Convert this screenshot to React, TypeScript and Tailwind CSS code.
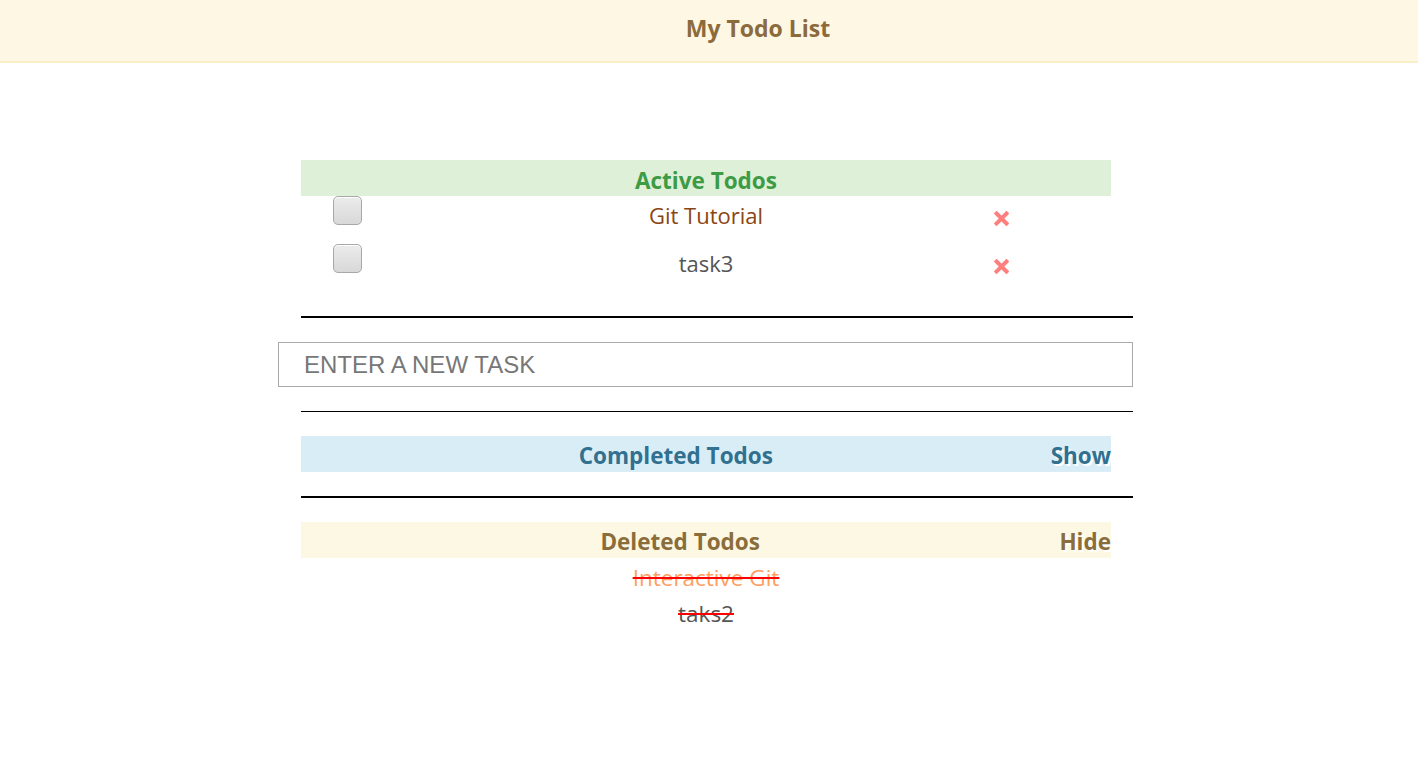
import React from "react";

const font = { fontFamily: '"Open Sans", "Noto Sans", sans-serif' };

function XIcon() {
  return (
    <svg width="15" height="15" viewBox="0 0 15 15">
      <path d="M2.5 2.5 L12.5 12.5 M12.5 2.5 L2.5 12.5" stroke="#ff7f7f" strokeWidth="4" strokeLinecap="square" />
    </svg>
  );
}

function Check() {
  return (
    <div className="w-[29px] h-[29px] rounded-[5px] border border-[#a8a8a8] bg-gradient-to-b from-[#ececec] to-[#d8d8d8] shadow-[inset_0_1px_0_#fff]" />
  );
}

function Row({ text, color }: { text: string; color: string }) {
  return (
    <div className="grid grid-cols-3 h-[48px]">
      <div className="pl-[32px]">
        <Check />
      </div>
      <div className={`text-center text-[22px] leading-[39px] ${color}`}>{text}</div>
      <div className="pl-[153px] pt-[15px]">
        <XIcon />
      </div>
    </div>
  );
}

export default function App() {
  return (
    <div className="min-h-[760px] bg-white" style={font}>
      <div className="h-[63px] bg-[#fdf7e3] border-b-2 border-[#f8eec8] flex items-center justify-center">
        <h1 className="text-[23px] font-bold text-[#8b6a3c] -mt-[4px] ml-[98px]">My Todo List</h1>
      </div>

      <div className="ml-[278px] w-[855px] mt-[97px]">
        <div className="ml-[23px] w-[810px]">
          <div className="h-[36px] bg-[#dff0d8] text-center text-[22.5px] font-bold text-[#3d9b45] leading-[41px]">
            Active Todos
          </div>
          <Row text="Git Tutorial" color="text-[#8b4513]" />
          <Row text="task3" color="text-[#555555]" />
        </div>

        <div className="ml-[23px] mt-[24px] h-[2px] bg-black" />

        <div className="mt-[24px] h-[45px] border border-[#a9a9a9] flex items-center pl-[25px]">
          <input
            className="w-full outline-none bg-transparent text-[24px] placeholder:text-[#777777] text-[#333]"
            style={{ fontFamily: '"Liberation Sans", Arial, sans-serif' }}
            placeholder="ENTER A NEW TASK"
          />
        </div>

        <div className="ml-[23px] mt-[24px] h-px bg-black" />

        <div className="ml-[23px] mt-[24px] w-[810px] h-[36px] bg-[#d9edf7] flex text-[22.5px] font-bold text-[#31708f] leading-[40px]">
          <div className="flex-1 text-center">Completed Todos</div>
          <div className="[text-shadow:2px_2px_0_#fff]">Show</div>
        </div>

        <div className="ml-[23px] mt-[24px] h-[2px] bg-black" />

        <div className="ml-[23px] mt-[24px] w-[810px]">
          <div className="h-[36px] bg-[#fcf8e3] flex text-[22.5px] font-bold text-[#8a6d3b] leading-[40px]">
            <div className="flex-1 text-center">Deleted Todos</div>
            <div className="[text-shadow:2px_2px_0_#fff]">Hide</div>
          </div>
          <div className="text-center text-[22.5px] leading-[36px] pt-[2px]">
            <div className="text-[#ffa060] line-through decoration-[#ff0000] decoration-2">Interactive Git</div>
            <div className="text-[#555555] line-through decoration-[#ff0000] decoration-2">taks2</div>
          </div>
        </div>
      </div>
    </div>
  );
}
